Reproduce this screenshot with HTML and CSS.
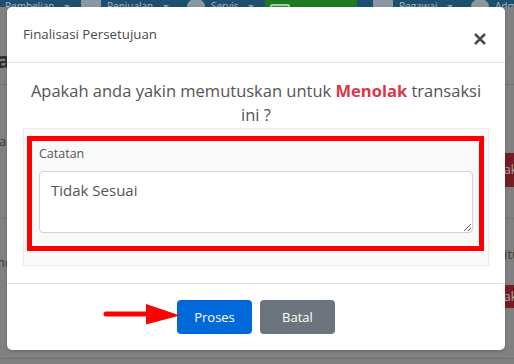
FILE: index.html
```html
<!DOCTYPE html>
<html lang="id">
<head>
<meta charset="utf-8">
<title>Finalisasi Persetujuan</title>
<link rel="stylesheet" href="styles.css">
</head>
<body>
<div class="page">
  <nav class="topnav">
    <div class="nav-item w1"><span class="nav-text">Pembelian</span><span class="caret"></span></div>
    <div class="nav-item w2"><span class="nav-icon box"></span><span class="nav-text">Penjualan</span><span class="caret"></span></div>
    <div class="nav-item w3"><span class="nav-icon gear"></span><span class="nav-text">Servis</span><span class="caret"></span></div>
    <div class="nav-item w4 active"><span class="nav-icon money"></span><span class="nav-text">Akunting</span><span class="caret"></span></div>
    <div class="nav-item w5"><span class="nav-icon box"></span><span class="nav-text">Pegawai</span><span class="caret"></span></div>
    <div class="nav-item w6"><span class="nav-icon gear"></span><span class="nav-text">Admin</span></div>
  </nav>
  <div class="content">
    <div class="row row-head"><span class="heading">a</span></div>
    <div class="row row-a"><span class="cell-left">a</span><span class="cell-right"><span class="bg-btn tall">ak</span></span></div>
    <div class="row row-b"><span class="cell-left nc">nc</span><span class="cell-right col"><span class="cell-txt">itu</span><span class="bg-btn">ak</span></span></div>
  </div>
</div>

<div class="modal">
  <div class="modal-header">
    <h5 class="modal-title">Finalisasi Persetujuan</h5>
    <button class="close" type="button" aria-label="Close">
      <svg width="12" height="12" viewBox="0 0 12 12"><path d="M1 1 L11 11 M11 1 L1 11" stroke="#4d4d4d" stroke-width="2.6" stroke-linecap="butt"/></svg>
    </button>
  </div>
  <div class="modal-body">
    <p class="question">Apakah anda yakin memutuskan untuk <b class="danger">Menolak</b> transaksi ini ?</p>
    <div class="card">
      <div class="highlight">
        <label class="label" for="catatan">Catatan</label>
        <textarea id="catatan" class="textarea">Tidak Sesuai</textarea>
      </div>
    </div>
  </div>
  <div class="modal-footer">
    <svg class="arrow" width="80" height="24" viewBox="0 0 80 24"><line x1="3" y1="11" x2="46" y2="11" stroke="#f00" stroke-width="5" stroke-linecap="round"/><polygon points="43,1 77,12.5 43,21.5" fill="#f00"/></svg>
    <button class="btn btn-primary" type="button">Proses</button>
    <button class="btn btn-secondary" type="button">Batal</button>
  </div>
</div>
</body>
</html>
```

FILE: styles.css
```css
html, body {
  margin: 0;
  padding: 0;
}
body {
  width: 514px;
  height: 364px;
  overflow: hidden;
  background: #808080;
  font-family: "Open Sans", "Noto Sans", sans-serif;
  position: relative;
}

/* dimmed background page */
.page {
  width: 514px;
}
.topnav {
  height: 7px;
  background: #1f4f6f;
  display: flex;
  align-items: flex-end;
  overflow: hidden;
}
.nav-item {
  display: flex;
  align-items: center;
  gap: 6px;
  height: 14px;
  margin-bottom: -6px;
  padding-left: 5px;
  box-sizing: border-box;
  flex: none;
  font-size: 10px;
  color: #a9b7c1;
}
.nav-item .caret {
  width: 0;
  height: 0;
  border-left: 3px solid transparent;
  border-right: 3px solid transparent;
  border-top: 3px solid #8fa2b0;
  margin-left: 4px;
}
.w1 { width: 76px; padding-left: 5px; }
.w2 { width: 106px; }
.w3 { width: 83px; }
.w4 { width: 92px; }
.w5 { width: 109px; padding-left: 16px; }
.w6 { width: 60px; padding-left: 5px; }
.nav-item.active {
  background: #1d7a21;
  height: 24px;
  margin-bottom: -16px;
  align-self: flex-end;
}
.nav-icon {
  width: 20px;
  height: 14px;
  background: #8b98a2;
  border-radius: 2px;
  flex: none;
}
.nav-icon.gear { width: 18px; border-radius: 50%; }
.nav-icon.money { background: #2f8a35; border: 2px solid #a5c8a6; box-sizing: border-box; }

.content {
  display: flex;
  flex-direction: column;
}
.row {
  display: flex;
  justify-content: space-between;
  border-bottom: 1px solid #737373;
  box-sizing: border-box;
}
.row-head {
  height: 78px;
  align-items: flex-start;
}
.heading {
  font-size: 22px;
  font-weight: 700;
  color: #2e2e2e;
  margin-top: 39px;
  margin-left: -3px;
  line-height: 26px;
}
.row-a {
  height: 134px;
}
.row-b {
  height: 140px;
}
.cell-left {
  font-size: 13px;
  color: #3a3a3a;
  margin-top: 47px;
  margin-left: -1px;
}
.cell-left.nc { margin-top: 34px; margin-left: -3px; }
.cell-right {
  display: flex;
  flex-direction: column;
  align-items: flex-end;
  padding-top: 68px;
}
.cell-right.col { padding-top: 26px; }
.cell-txt {
  font-size: 13px;
  color: #3a3a3a;
  margin-bottom: 22px;
  margin-right: -6px;
}
.bg-btn {
  background: #751c24;
  color: #a8a8a8;
  font-size: 12px;
  width: 30px;
  height: 23px;
  line-height: 23px;
  padding-left: 2px;
  box-sizing: border-box;
  border-radius: 3px 0 0 3px;
  margin-right: -18px;
}
.bg-btn.tall { height: 34px; line-height: 34px; }

/* modal */
.modal {
  position: absolute;
  top: 7px;
  left: 7px;
  width: 498px;
  background: #fff;
  border-radius: 5px;
  box-shadow: 0 1px 3px rgba(0, 0, 0, 0.2);
}
.modal-header {
  display: flex;
  justify-content: space-between;
  align-items: center;
  height: 56px;
  box-sizing: border-box;
  padding: 0 19px 0 16px;
  border-bottom: 1px solid #dee2e6;
}
.modal-title {
  margin: 0 0 2px;
  font-size: 13.3px;
  font-weight: 400;
  color: #4a4a4a;
}
.close {
  background: none;
  border: 0;
  padding: 0;
  width: 12px;
  height: 12px;
  margin-top: 8px;
  display: flex;
}
.modal-body {
  padding: 16px 16px 17px;
}
.question {
  margin: 0 0 1px;
  text-align: center;
  font-size: 16.5px;
  line-height: 24px;
  color: #545454;
}
.danger {
  color: #dc3545;
  font-weight: 700;
}
.card {
  background: #f9f9f9;
  border: 1px solid #ececec;
  padding: 7px 4px 14px 3px;
}
.highlight {
  border: 5px solid #ff0000;
  padding: 4px 6px 13px 7px;
}
.label {
  display: block;
  font-size: 12.5px;
  line-height: 18px;
  color: #555;
  margin-bottom: 8px;
}
.textarea {
  display: block;
  width: 100%;
  height: 62px;
  box-sizing: border-box;
  border: 1px solid #ced4da;
  border-radius: 4px;
  padding: 7px 11px;
  font-family: "Open Sans", "Noto Sans", sans-serif;
  font-size: 15px;
  line-height: 22px;
  color: #555;
  background: #fff;
  resize: vertical;
}
.modal-footer {
  position: relative;
  display: flex;
  justify-content: center;
  gap: 8px;
  padding: 16px;
  border-top: 1px solid #dee2e6;
}
.arrow {
  position: absolute;
  left: 96px;
  top: 19px;
}
.btn {
  width: 75px;
  height: 34px;
  border: 0;
  border-radius: 4px;
  color: #fff;
  font-family: "Open Sans", "Noto Sans", sans-serif;
  font-size: 13px;
  padding: 0;
}
.btn-primary {
  background: #0069d9;
}
.btn-secondary {
  background: #6c757d;
}
```
